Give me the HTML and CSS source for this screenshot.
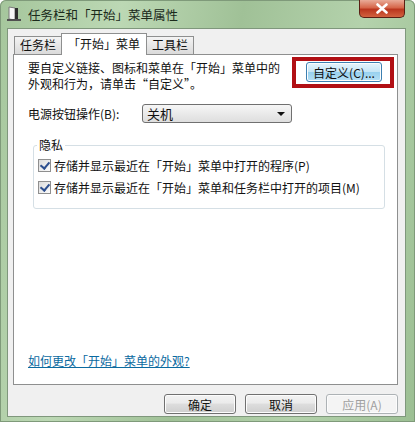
FILE: index.html
```html
<!DOCTYPE html>
<html lang="zh-CN">
<head>
    <meta charset="UTF-8">
    <title>任务栏和「开始」菜单属性</title>
    <link rel="stylesheet" href="styles.css">
</head>
<body>
    <div class="window">
        <div class="titlebar">
            <svg class="app-icon" width="16" height="16" viewBox="0 0 16 16">
                <path d="M3 1 L9 2 L9 14 L3 13 Z" fill="#f7f7f7" stroke="#7a7a7a"/>
                <rect x="9" y="2" width="3" height="12" fill="#2e2e2e"/>
                <rect x="1" y="13" width="14" height="2" fill="#505050"/>
            </svg>
            <span class="title">任务栏和「开始」菜单属性</span>
            <div class="close">
                <svg width="14" height="11" viewBox="0 0 14 11">
                    <path d="M2.5 1.5 L11.5 9.5 M11.5 1.5 L2.5 9.5" stroke="#fff" stroke-width="2.6" stroke-linecap="round"/>
                </svg>
            </div>
        </div>

        <div class="client">
            <div class="tabs">
                <div class="tab">任务栏</div>
                <div class="tab active">「开始」菜单</div>
                <div class="tab">工具栏</div>
            </div>

            <div class="panel">
                <div class="intro">
                    <p class="intro-text">要自定义链接、图标和菜单在「开始」菜单中的<br>外观和行为，请单击“自定义”。</p>
                    <div class="highlight">
                        <button class="btn btn-custom">自定义(C)...</button>
                    </div>
                </div>

                <div class="power-row">
                    <span class="power-label">电源按钮操作(B):</span>
                    <div class="select">
                        <span>关机</span>
                        <span class="arrow"></span>
                    </div>
                </div>

                <fieldset class="group">
                    <legend>隐私</legend>
                    <label class="check"><span class="box"></span>存储并显示最近在「开始」菜单中打开的程序(P)</label>
                    <label class="check"><span class="box"></span>存储并显示最近在「开始」菜单和任务栏中打开的项目(M)</label>
                </fieldset>

                <a class="help-link" href="#">如何更改「开始」菜单的外观?</a>
            </div>

            <div class="footer">
                <button class="btn">确定</button>
                <button class="btn">取消</button>
                <button class="btn" disabled>应用(A)</button>
            </div>
        </div>
    </div>
</body>
</html>
```

FILE: styles.css
```css
* {
    box-sizing: border-box;
}
body {
    margin: 0;
    font-family: "Noto Sans CJK SC", "Liberation Sans", sans-serif;
    font-size: 12px;
    color: #111;
}
.window {
    width: 415px;
    height: 422px;
    padding: 0 9px 0 7px;
    background: linear-gradient(100deg, #a5c69c 0%, #bcd8b4 25%, #a0c197 50%, #b4d2ac 75%, #9cbf93 100%);
    border-radius: 6px 6px 0 0;
    box-shadow: inset 0 0 0 1px #7f9a7a;
}
.titlebar {
    display: flex;
    align-items: center;
    height: 28px;
    position: relative;
}
.app-icon {
    margin: 0 6px 0 -1px;
}
.title {
    font-size: 12.5px;
    color: #1b2a1b;
}
.close {
    position: absolute;
    right: 1px;
    top: 0;
    width: 46px;
    height: 18px;
    display: flex;
    align-items: center;
    justify-content: center;
    border: 1px solid #5a1f14;
    border-top: none;
    border-radius: 0 0 5px 5px;
    background: linear-gradient(#e9ab98 0%, #d6664a 45%, #ba361e 55%, #d2623f 100%);
}
.client {
    height: 389px;
    background: #f0f0f0;
    border: 1px solid #7f977c;
    padding: 4px 7px 0 5px;
}
.tabs {
    display: flex;
    align-items: flex-end;
    height: 21px;
    padding-left: 1px;
}
.tab {
    height: 18px;
    padding: 0 5px;
    line-height: 16px;
    font-size: 12px;
    border: 1px solid #8e8f8f;
    border-bottom: none;
    background: linear-gradient(#f4f4f4, #dadada);
    margin-right: -1px;
}
.tab.active {
    height: 22px;
    padding: 0 6px;
    line-height: 19px;
    background: #fff;
    position: relative;
    z-index: 1;
    margin-bottom: -1px;
}
.panel {
    height: 331px;
    background: #fff;
    border: 1px solid #8e8f8f;
    padding: 2px 3px 0 14px;
    display: flex;
    flex-direction: column;
}
.intro {
    display: flex;
    justify-content: space-between;
    align-items: flex-start;
}
.intro-text {
    margin: 3px 0 0;
    line-height: 16px;
    font-size: 12px;
}
.highlight {
    border: 4px solid #b10f14;
    padding: 1px 8px 2px 10px;
}
.btn {
    font-family: inherit;
    font-size: 12px;
    height: 20px;
    width: 72px;
    padding: 0;
    color: #111;
    border: 1px solid #707070;
    border-radius: 3px;
    background: linear-gradient(#f2f2f2 0%, #ebebeb 45%, #dddddd 50%, #cfcfcf 100%);
    box-shadow: inset 0 0 0 1px #fcfcfc;
}
.btn-custom {
    width: 76px;
    height: 20px;
    border-color: #3c7fb1;
    background: linear-gradient(#e5f4fc 0%, #c4e5f6 50%, #98d1ef 51%, #b6e0f5 100%);
}
.btn:disabled {
    color: #a0a0a0;
    border-color: #adb2b5;
    background: #f4f4f4;
}
.power-row {
    display: flex;
    align-items: center;
    margin-top: 12px;
}
.power-label {
    width: 114px;
}
.select {
    width: 150px;
    height: 19px;
    border: 1px solid #707070;
    border-radius: 3px;
    background: linear-gradient(#f6f6f6, #dedede);
    display: flex;
    align-items: center;
    justify-content: space-between;
    padding: 0 6px 0 4px;
    font-size: 13px;
}
.arrow {
    width: 0;
    height: 0;
    border-left: 4px solid transparent;
    border-right: 4px solid transparent;
    border-top: 4px solid #111;
}
.group {
    margin: 14px 0 0 5px;
    width: 352px;
    height: 72px;
    border: 1px solid #d5dfe5;
    border-radius: 3px;
    padding: 0 0 0 4px;
}
.group legend {
    padding: 0 2px;
    margin-left: -1px;
    font-size: 12px;
    line-height: 16px;
}
.check {
    display: flex;
    align-items: center;
    height: 20px;
    font-size: 12px;
    margin-top: 2px;
}
.box {
    width: 13px;
    height: 13px;
    border: 1px solid #8f8f8f;
    background: linear-gradient(135deg, #dcdcdc, #fbfbfb);
    margin-right: 3px;
    position: relative;
}
.box::after {
    content: "";
    position: absolute;
    left: 3px;
    top: 0;
    width: 4px;
    height: 7px;
    border: solid #2d4f8f;
    border-width: 0 2px 2px 0;
    transform: rotate(40deg);
}
.help-link {
    margin-top: auto;
    margin-bottom: 15px;
    color: #0b6a9f;
    font-size: 12px;
    text-decoration: underline;
}
.footer {
    display: flex;
    justify-content: flex-end;
    gap: 9px;
    padding: 9px 0 0;
}
```
